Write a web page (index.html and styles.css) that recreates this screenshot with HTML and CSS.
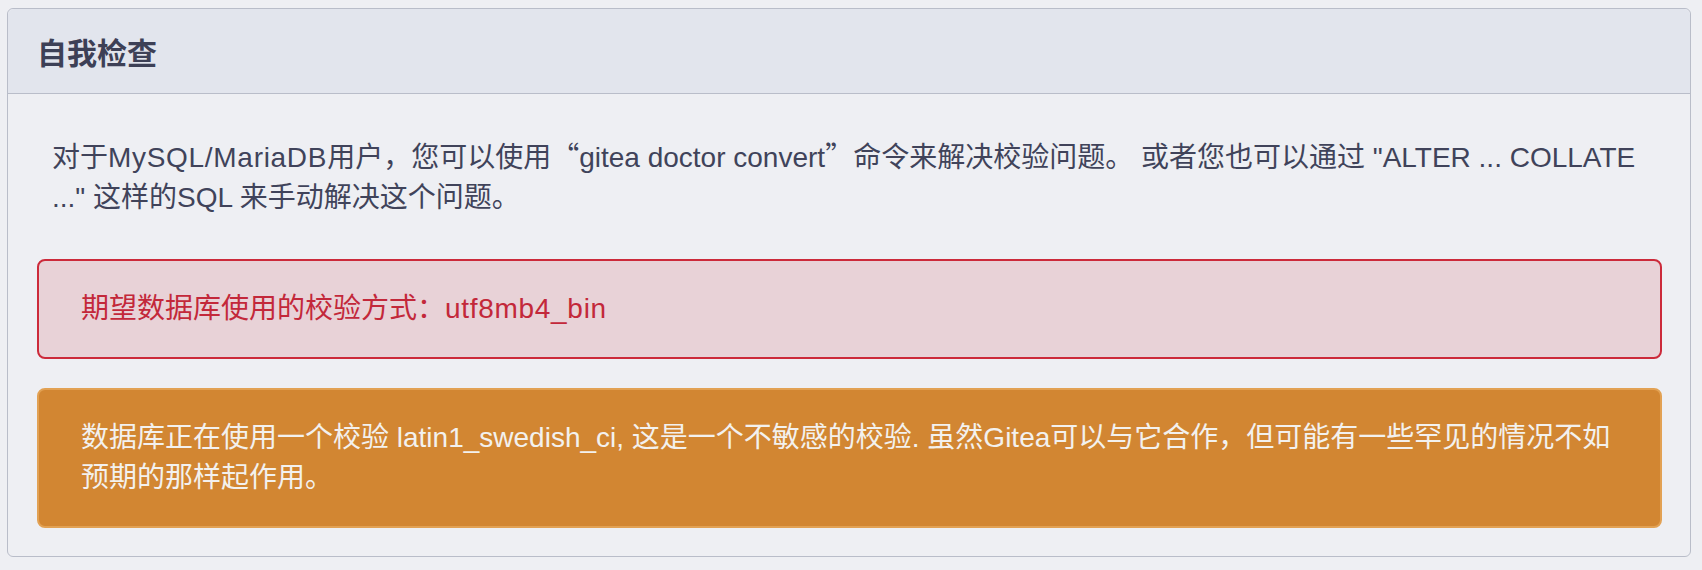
FILE: index.html
```html
<!DOCTYPE html>
<html lang="zh-CN">
<head>
<meta charset="utf-8">
<title>自我检查</title>
<link rel="stylesheet" href="styles.css">
</head>
<body>
<div class="card">
  <div class="card-header">自我检查</div>
  <div class="card-body">
    <p class="intro"><span>对于<span class="latin-wide">MySQL/MariaDB</span>用户，您可以使用</span><span class="cjk-quote">“</span><span>gitea doctor convert</span><span class="cjk-quote">”</span><span>命令来解决校验问题。 或者您也可以通过 "ALTER ... COLLATE</span> <span>..." 这样的SQL 来手动解决这个问题。</span></p>
    <div class="message message-red">期望数据库使用的校验方式：<span class="latin-wide">utf8mb4_bin</span></div>
    <div class="message message-orange">数据库正在使用一个校验 latin1_swedish_ci, 这是一个不敏感的校验. 虽然Gitea可以与它合作，但可能有一些罕见的情况不如预期的那样起作用。</div>
  </div>
</div>
</body>
</html>
```

FILE: styles.css
```css
html, body {
  margin: 0;
  background: #eeeff3;
}
body {
  padding: 8px 11px 0 7px;
  font-family: "Liberation Sans", "Noto Sans CJK SC", sans-serif;
  color: #40435a;
}
.card {
  border: 1px solid #b9bdc9;
  border-radius: 6px;
  background: #eeeff3;
}
.card-header {
  height: 84px;
  display: flex;
  align-items: center;
  padding: 0 29px;
  background: #e2e5ed;
  border-bottom: 1px solid #b9bdc9;
  border-radius: 6px 6px 0 0;
  font-size: 30px;
  font-weight: 700;
  color: #3d4056;
}
.card-body {
  padding: 44px 28px 28px 29px;
  display: flex;
  flex-direction: column;
}
.intro {
  margin: 0 0 41px;
  padding: 0 15px;
  font-size: 28px;
  line-height: 40px;
}
.latin-wide {
  letter-spacing: 0.7px;
}
.cjk-quote {
  font-family: "Noto Sans CJK SC", sans-serif;
  line-height: 1;
}
.message {
  border: 2px solid;
  border-radius: 8px;
  padding: 28px 42px;
  font-size: 28px;
  line-height: 40px;
}
.message + .message {
  margin-top: 29px;
}
.message-red {
  background: #e8d2d7;
  border-color: #cc2a3a;
  color: #c3283a;
}
.message-orange {
  background: #d28632;
  border-color: #e2a153;
  color: #f3f1ee;
}
```
